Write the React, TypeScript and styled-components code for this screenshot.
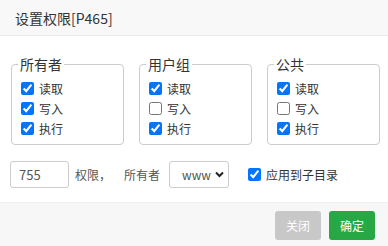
import React from "react";
import styled, { createGlobalStyle } from "styled-components";

const Global = createGlobalStyle`
  html, body { margin: 0; padding: 0; background: #fff; }
  body { font-family: "Noto Sans CJK SC", "Noto Sans", sans-serif; color: #333; }
  * { box-sizing: border-box; }
`;

const Dialog = styled.div`
  width: 388px;
  height: 246px;
  display: flex;
  flex-direction: column;
  background: #fff;
`;

const Header = styled.div`
  height: 36px;
  padding-left: 15px;
  display: flex;
  align-items: center;
  font-size: 14px;
  color: #333;
  background: #f8f8f8;
  border-bottom: 1px solid #eaeaea;
`;

const Body = styled.div`
  flex: 1;
  padding: 18px 7px 0 11px;
  display: flex;
  flex-direction: column;
`;

const Groups = styled.div`
  display: flex;
  gap: 15px;
`;

const Group = styled.fieldset`
  width: 113px;
  margin: 0;
  padding: 4px 6px 6px 6px;
  border: 1px solid #ccc;
  border-radius: 4px;
  display: flex;
  flex-direction: column;
`;

const Legend = styled.legend`
  padding: 0 2px;
  font-size: 14px;
  line-height: 20px;
  color: #333;
`;

const CheckRow = styled.label`
  height: 20px;
  display: flex;
  align-items: center;
  gap: 5px;
  font-size: 12px;
  color: #333;
`;

const Check = styled.input.attrs({ type: "checkbox" })<{ $ml?: number }>`
  width: 13px;
  height: 13px;
  margin: 0 0 0 ${(p) => (p.$ml ?? 3)}px;
  accent-color: #0075ff;
`;

const Controls = styled.div`
  margin-top: 16px;
  height: 27px;
  display: flex;
  align-items: center;
  font-size: 12px;
  color: #555;
`;

const ModeInput = styled.input`
  width: 59px;
  height: 27px;
  margin-left: -1px;
  padding: 0 8px;
  border: 1px solid #ccc;
  border-radius: 3px;
  font-family: "Noto Sans CJK SC", "Noto Sans", sans-serif;
  font-size: 13px;
  color: #555;
  outline: none;
`;

const Text = styled.span<{ $ml: number }>`
  margin-left: ${(p) => p.$ml}px;
  white-space: nowrap;
`;

const SelectWrap = styled.div`
  position: relative;
  margin-left: 9px;
  width: 60px;
  height: 27px;
`;

const Select = styled.select`
  appearance: none;
  width: 100%;
  height: 100%;
  padding: 0 0 0 12px;
  border: 1px solid #ccc;
  border-radius: 3px;
  background: #fff;
  font-family: "Noto Sans CJK SC", "Noto Sans", sans-serif;
  font-size: 12px;
  color: #555;
  outline: none;
`;

const Chevron = styled.svg`
  position: absolute;
  right: 5px;
  top: 10px;
  pointer-events: none;
`;

const SubCheck = styled.label`
  margin-left: 19px;
  display: flex;
  align-items: center;
  gap: 5px;
  font-size: 12px;
  color: #333;
`;

const Footer = styled.div`
  height: 44px;
  padding: 8px 13px 0 0;
  display: flex;
  justify-content: flex-end;
  align-items: flex-start;
  gap: 8px;
  background: #f7f7f7;
  border-top: 1px solid #eee;
`;

const Button = styled.button<{ $primary?: boolean }>`
  width: 46px;
  height: 29px;
  padding: 0;
  border: none;
  border-radius: 3px;
  font-family: "Noto Sans CJK SC", "Noto Sans", sans-serif;
  font-size: 12px;
  color: #fff;
  background: ${(p) => (p.$primary ? "#28a745" : "#c8c8c8")};
`;

const groups = [
  { name: "所有者", r: true, w: true, x: true },
  { name: "用户组", r: true, w: false, x: true },
  { name: "公共", r: true, w: false, x: true },
];

export default function App() {
  return (
    <>
      <Global />
      <Dialog>
        <Header>设置权限[P465]</Header>
        <Body>
          <Groups>
            {groups.map((g) => (
              <Group key={g.name}>
                <Legend>{g.name}</Legend>
                <CheckRow>
                  <Check defaultChecked={g.r} />
                  读取
                </CheckRow>
                <CheckRow>
                  <Check defaultChecked={g.w} />
                  写入
                </CheckRow>
                <CheckRow>
                  <Check defaultChecked={g.x} />
                  执行
                </CheckRow>
              </Group>
            ))}
          </Groups>
          <Controls>
            <ModeInput defaultValue="755" />
            <Text $ml={6}>权限，</Text>
            <Text $ml={13}>所有者</Text>
            <SelectWrap>
              <Select defaultValue="www">
                <option value="www">www</option>
              </Select>
              <Chevron width="9" height="7" viewBox="0 0 9 7">
                <path d="M1 1.5 L4.5 5 L8 1.5" fill="none" stroke="#222" strokeWidth="2" />
              </Chevron>
            </SelectWrap>
            <SubCheck>
              <Check defaultChecked $ml={0} />
              应用到子目录
            </SubCheck>
          </Controls>
        </Body>
        <Footer>
          <Button>关闭</Button>
          <Button $primary>确定</Button>
        </Footer>
      </Dialog>
    </>
  );
}
